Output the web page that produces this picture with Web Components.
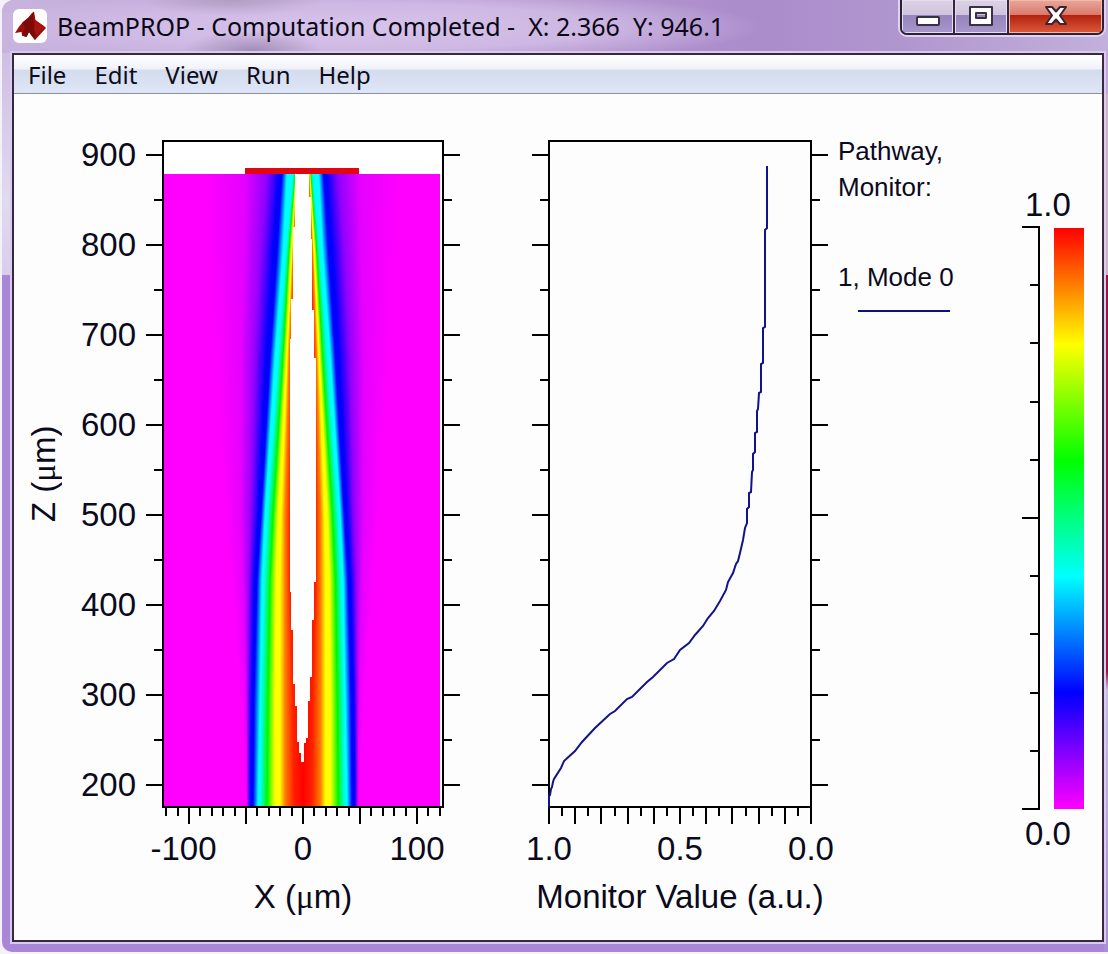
<!DOCTYPE html>
<html lang="en">
<head>
<meta charset="utf-8">
<title>BeamPROP</title>
<style>
  body { margin: 0; background: #f4f1f8; font-family: "Liberation Sans", Arial, sans-serif; color: #0a0a1c; }
</style>
</head>
<body>
<app-window>
  <title-bar slot="title">BeamPROP - Computation Completed -  X: 2.366  Y: 946.1</title-bar>
  <menu-bar slot="menu" items="File,Edit,View,Run,Help"></menu-bar>
  <result-view></result-view>
</app-window>

<script>
const define = (name, html, setup) => {
  const tpl = document.createElement('template');
  tpl.innerHTML = html;
  customElements.define(name, class extends HTMLElement {
    connectedCallback() {
      if (this.shadowRoot) return;
      this.attachShadow({ mode: 'open' }).append(tpl.content.cloneNode(true));
      if (setup) setup.call(this, this.shadowRoot);
    }
  });
};

/* ---------- window frame ---------- */
define('app-window', `
<style>
  :host { display: flex; flex-direction: column; box-sizing: border-box; min-height: 100vh; border: solid #f4f1f8; border-width: 0 0 2px 2px; }
  .frame { flex: 1; display: flex; flex-direction: column; padding: 0 4px 10px 10px; border-radius: 12px 0 0 10px;
    background:
      linear-gradient(#c3a6d6 0, #c3a6d6 94px, #d5b0bf 94px, #d5b0bf 275px, #a3103a 275px, #a3103a 672px, #c9bde6 690px, #a98fd6 100%) right top / 4px 100% no-repeat,
      linear-gradient(#c6b4e0 0, #e2daf0 200px, #d9cdec 275px, #a987d8 275px) left top / 10px 100% no-repeat,
      #a987d8; }
  .client { flex: 1; display: flex; flex-direction: column; border: 2px solid #38293f; box-shadow: 0 0 0 2px #d9caf0; background: #fdfdfe; }
</style>
<div class="frame">
  <slot name="title"></slot>
  <div class="client"><slot name="menu"></slot><slot></slot></div>
</div>`);

/* ---------- title bar ---------- */
define('title-bar', `
<style>
  :host { display: flex; align-items: flex-start; height: 53px; margin: 0 -4px 0 -10px; border-radius: 12px 0 0 0;
    background:
      radial-gradient(ellipse 70px 20px at 250px 51px, #8d78a3aa, transparent),
      radial-gradient(ellipse 90px 16px at 230px 0, #a592b4aa, transparent),
      radial-gradient(ellipse 400px 38px at 360px 27px, #d6c3ea 0, #d3bfe8cc 60%, transparent),
      linear-gradient(90deg, #c8b3de 0, #b799d0 500px, #ab8ccb 760px, #b096cf 900px, #c3b0dc 100%); }
  .icon { flex: none; margin: 9px 10px 0 11px; }
  h1 { flex: 1; margin: 0; padding-top: 8px; font: 25px/36px "Noto Sans", "Open Sans", sans-serif; white-space: pre; color: #0c0714; overflow: hidden; }
  .controls { flex: none; display: flex; margin-right: 4px; height: 33px; border: 2px solid #2c2036; border-top: 0; border-radius: 0 0 7px 7px; box-shadow: 0 0 0 2px #e0d3ef; overflow: hidden; }
  button { width: 53px; margin: 0; padding: 0; border: 0; border-right: 2px solid #33253f; display: flex; justify-content: center;
    background: linear-gradient(#dcd2e4 0, #cfc3dd 15px, #9683bd 15px, #a797cb 100%); box-shadow: inset 0 0 0 1px #e6def0; }
  button + button { width: 54px; }
  button.close { width: 93px; border-right: 0; background: linear-gradient(#e9a79b 0, #d9796a 15px, #b3200f 15px, #dd5a3c 100%); box-shadow: inset 0 0 0 1px #f3b9ab; }
  button svg { display: block; }
</style>
<svg class="icon" width="34" height="34" viewBox="0 0 34 34" aria-hidden="true">
  <rect width="34" height="34" rx="6" fill="#fff"/>
  <path d="M21 2.500 L22.500 11 L31 17 L33 19 L22 31 L18 26 L16 23 L13.500 28 L9 26.500 L8.500 23 L2 24 L6.500 17 L10 13 L15 9 L19 4Z" fill="#9a0f0c"/>
  <path d="M21 3 L20.500 12 L23 22 L22 31 L16 23 L13.500 28 L9 26.500 L12 18 L9 14 L15 9Z" fill="#7c0a08"/>
  <path d="M22.500 12 L31 18 L23 26 L21 20Z" fill="#a81410"/>
</svg>
<h1><slot></slot></h1>
<div class="controls">
  <button type="button" aria-label="Minimize"><svg width="26" height="30"><rect x="2" y="17" width="22" height="8" rx="1" fill="#fff" stroke="#3a3148" stroke-width="2"/></svg></button>
  <button type="button" aria-label="Maximize"><svg width="26" height="30"><path fill-rule="evenodd" d="M2 7H24V25H2Z M8 13V18H18V13Z" fill="#fff" stroke="#3a3148" stroke-width="2" stroke-linejoin="round"/></svg></button>
  <button type="button" class="close" aria-label="Close"><svg width="26" height="30"><path d="M3 7H9L13 11.500L17 7H23L17 15.500L23 24H17L13 19.500L9 24H3L9 15.500Z" fill="#fff" stroke="#3d2430" stroke-width="2" stroke-linejoin="round"/></svg></button>
</div>`);

/* ---------- menu bar ---------- */
define('menu-bar', `
<style>
  :host { display: block; border-bottom: 1px solid #8b8f9c; background: linear-gradient(#fff 0, #f0f2f8 14px, #d5dbee 15px, #dde6f6 100%); }
  nav { display: flex; height: 38px; }
  button { margin: 0; padding: 0 14px; border: 0; background: none; color: #0c0c18; font: 24px/40px "Noto Sans", "Open Sans", sans-serif; }
</style>
<nav></nav>`, function (root) {
  for (const item of this.getAttribute('items').split(',')) {
    const b = document.createElement('button');
    b.type = 'button';
    b.textContent = item;
    root.querySelector('nav').append(b);
  }
});

/* ---------- result page ---------- */
define('result-view', `
<style>
  :host { flex: 1; display: grid; padding: 46px 18px 25px 14px;
    grid-template-columns: 32px minmax(0, 400fr) 72px minmax(0, 296fr) 10px 184px 62px; }
  .z { display: flex; align-items: center; justify-content: center; height: calc(100% - 107px); font-size: 33px; line-height: 32px; writing-mode: vertical-rl; transform: rotate(180deg); white-space: nowrap; }
  .mu { font-family: "Liberation Serif", serif; }
  axis-plot.monitor { grid-column: 4; }
  plot-legend { grid-column: 6; }
  color-scale { grid-column: 7; }
</style>
<div class="z"><span>Z (<span class="mu">μ</span>m)</span></div>
<axis-plot class="field" zlabels="900,800,700,600,500,400,300,200" xlabels="-100,0,100" label-step="114" span="282" origin="141" ticks="12" major="5">
  <beam-field></beam-field><span slot="title">X (<span class="mu">μ</span>m)</span>
</axis-plot>
<axis-plot class="monitor" xlabels="1.0,0.5,0.0" label-step="131" span="264" origin="132" ticks="10" major="2">
  <monitor-curve></monitor-curve><span slot="title">Monitor Value (a.u.)</span>
</axis-plot>
<plot-legend></plot-legend>
<color-scale></color-scale>`);

/* ---------- framed plot with ticks on three sides ---------- */
define('axis-plot', `
<style>
  :host { display: grid; grid-template: minmax(0, 1fr) auto auto / auto minmax(0, 1fr); padding-right: 16px; font-size: 33px; line-height: 36px; }
  .zl { display: flex; flex-direction: column; justify-content: space-between; box-sizing: border-box; padding: 0 26px 5px 0; margin-top: -3px; text-align: right; }
  .zl:not(:empty) { width: 102px; }
  .zl:empty { padding-right: 16px; }
  .box { position: relative; display: flex; flex-direction: column; box-sizing: border-box; border: 2px solid #000; }
  .axes { position: absolute; inset: -2px; width: calc(100% + 4px); height: calc(100% + 4px); overflow: visible; shape-rendering: crispEdges; }
  line { stroke: #000; stroke-width: 2; }
  .xl { grid-column: 2; display: flex; justify-content: center; padding-top: 23px; }
  .xl span { flex: none; text-align: center; }
  .xl i { font-style: normal; margin-left: -11px; }
  .title { grid-column: 2; padding-top: 12px; display: flex; justify-content: center; white-space: nowrap; }
</style>
<div class="zl"></div>
<div class="box"><slot></slot><svg class="axes" aria-hidden="true"><g></g><svg class="right" x="100%" width="100%" height="100%" overflow="visible"></svg><svg class="bottom" y="100%" width="100%" height="100%" overflow="visible"></svg></svg></div>
<div class="xl"></div>
<div class="title"><slot name="title"></slot></div>`, function (root) {
  const num = (n) => Number(this.getAttribute(n));
  const span = num('span'), step = num('label-step'), H = 668;
  const zl = this.getAttribute('zlabels');
  if (zl) root.querySelector('.zl').innerHTML = zl.split(',').map((t) => `<span>${t}</span>`).join('');
  root.querySelector('.xl').innerHTML = this.getAttribute('xlabels').split(',')
    .map((t) => `<span style="width:${step / span * 100}%">${t.replace('-', '<i>-</i>')}</span>`).join('');
  let left = '', right = '', bottom = '';
  for (let v = 900, k = 0; v >= 200; v -= 50, k++) {
    const y = (15 + (900 - v) * 0.9) / H * 100, len = k % 2 ? 8 : 16;
    left += `<line x1="${-len}" x2="0" y1="${y}%" y2="${y}%"/>`;
    right += `<line x1="0" x2="${len}" y1="${y}%" y2="${y}%"/>`;
  }
  const major = num('major'), n = num('ticks');
  for (let k = -n; k <= n; k++) {
    const x = (num('origin') + k * step / 10) / span * 100;
    bottom += `<line x1="${x}%" x2="${x}%" y1="0" y2="${k % major ? 8 : 16}"/>`;
  }
  root.querySelector('g').innerHTML = left;
  root.querySelector('.right').innerHTML = right;
  root.querySelector('.bottom').innerHTML = bottom;
});

/* ---------- field intensity map ---------- */
define('beam-field', `
<style>
  :host { flex: 1; display: flex; flex-direction: column; background: #fff; padding: 26px 2px 0 0; min-height: 0; }
  .lens { flex: none; height: 6px; width: 41%; margin: 0 auto; background: #e20613; }
  canvas { display: block; flex: 1 1 0; min-height: 0; width: 100%; }
</style>
<div class="lens"></div>
<canvas width="276" height="632"></canvas>`, function (root) {
  const c = root.querySelector('canvas').getContext('2d');
  const W = 276, H = 632, axis = 139;
  const colors = ['#ff00ff', '#e600ff', '#9000ff', '#0000ff', '#0000ff', '#00ffff', '#00ffff', '#00f800', '#ffff00', '#ffff00', '#ff8000', '#ff2000'];
  /* distance of each colour from the axis, at some heights */
  const rows = [
    [0, 100, 58, 36, 24, 21, 16, 10, 8, 7, 7, 6, 4],
    [78, 95, 60, 42, 30, 26, 20, 17, 14, 12, 11, 10, 8],
    [184, 88, 62, 48, 37, 33, 28, 25, 20, 17, 16, 14, 11],
    [341, 78, 62, 52, 45, 42, 38, 36, 30, 25, 22, 18, 13],
    [406, 72, 60, 54, 49, 46, 41, 39, 33, 27, 23, 18, 13],
    [526, 62, 57, 55, 52, 49, 43, 42, 35, 28, 23, 18, 10],
    [632, 57, 56, 55, 53, 50, 45, 43, 36, 28, 23, 18, 9]
  ];
  for (let y = 0; y < H; y++) {
    let i = 0;
    while (i < rows.length - 2 && rows[i + 1][0] <= y) i++;
    const a = rows[i], b = rows[i + 1], t = (y - a[0]) / (b[0] - a[0]);
    const g = c.createLinearGradient(0, 0, W, 0);
    colors.forEach((col, k) => {
      const r = a[k + 1] + (b[k + 1] - a[k + 1]) * t;
      g.addColorStop((axis - r) / W, col);
      g.addColorStop((axis + r * 0.98) / W, col);
    });
    g.addColorStop(axis / W, '#ff0000');
    c.fillStyle = g;
    c.fillRect(0, y, W, 1);
  }
  /* saturated core, in steps: [to y, distance] */
  const left = [[53, 8], [125, 10], [165, 12], [418, 13], [456, 12], [510, 10], [532, 8], [568, 6], [579, 4], [588, 2]];
  const right = [[23, 6], [65, 8], [136, 9], [184, 11], [408, 13], [446, 11], [503, 9], [527, 7], [564, 5], [569, 3], [588, 1]];
  c.fillStyle = '#fff';
  let y = 0;
  for (const [to, r] of left) { c.fillRect(axis - r, y, r, to - y); y = to; }
  y = 0;
  for (const [to, r] of right) { c.fillRect(axis, y, r, to - y); y = to; }
});

/* ---------- monitor curve ---------- */
define('monitor-curve', `
<style>
  :host { flex: 1; display: flex; min-height: 0; margin: -2px; }
  svg { width: 100%; height: 100%; min-height: 0; }
  .hold { flex: 1; display: grid; contain: size; }
  polyline { fill: none; stroke: #12128a; stroke-width: 2; vector-effect: non-scaling-stroke; }
</style>
<div class="hold"><svg viewBox="0 0 264 668" preserveAspectRatio="none" aria-hidden="true">
<polyline points="219,26 219,88 217,90 217,187 215,188 215,223 213,224 213,252 211,253 210,269 209,271 209,292 207,293 207,312 205,314 205,330 204,332 203,352 201,353 201,367 199,369 199,383 197,388 195,400 192,413 190,421 188,424 185,433 180,442 178,450 172,461 166,471 160,478 155,486 147,495 141,503 132,510 126,519 119,523 105,537 99,542 84,557 79,559 67,571 62,574 47,588 34,602 27,611 16,621 13,628 6,639 5,642 4,647 3,649 2,655 1,656 1,667"/>
</svg></div>`);

/* ---------- legend ---------- */
define('plot-legend', `
<style>
  :host { display: block; font-size: 26px; line-height: 36px; }
  p { margin: 0; }
  .head { margin-top: -7px; }
  .entry { margin-top: 54px; }
  hr { width: 92px; height: 2px; margin: 15px 0 0 20px; border: 0; background: #10107c; }
</style>
<p class="head">Pathway,<br>Monitor:</p>
<p class="entry">1, Mode 0</p>
<hr>`);

/* ---------- colour scale ---------- */
define('color-scale', `
<style>
  :host { display: flex; flex-direction: column; padding: 47px 0 63px; font-size: 33px; line-height: 36px; }
  .label { padding-left: 3px; }
  .scale { flex: 1; display: flex; justify-content: space-between; margin: 4px 0 7px; }
  .bar { width: 30px; margin-top: 1px; background: linear-gradient(#f00, #ff0 20%, #0f0 40%, #0ff 60%, #00f 80%, #f0f); }
  svg { width: 18px; height: auto; overflow: visible; shape-rendering: crispEdges; }
  line { stroke: #000; stroke-width: 2; }
</style>
<div class="label">1.0</div>
<div class="scale"><svg aria-hidden="true"><line x1="17" x2="17" y1="-1" y2="100%"/></svg><div class="bar"></div></div>
<div class="label">0.0</div>`, function (root) {
  let s = '';
  for (let k = 0; k <= 10; k++) s += `<line x1="${k % 5 ? 8 : 0}" x2="18" y1="${k * 10}%" y2="${k * 10}%"/>`;
  root.querySelector('svg').innerHTML += s;
});
</script>
</body>
</html>
